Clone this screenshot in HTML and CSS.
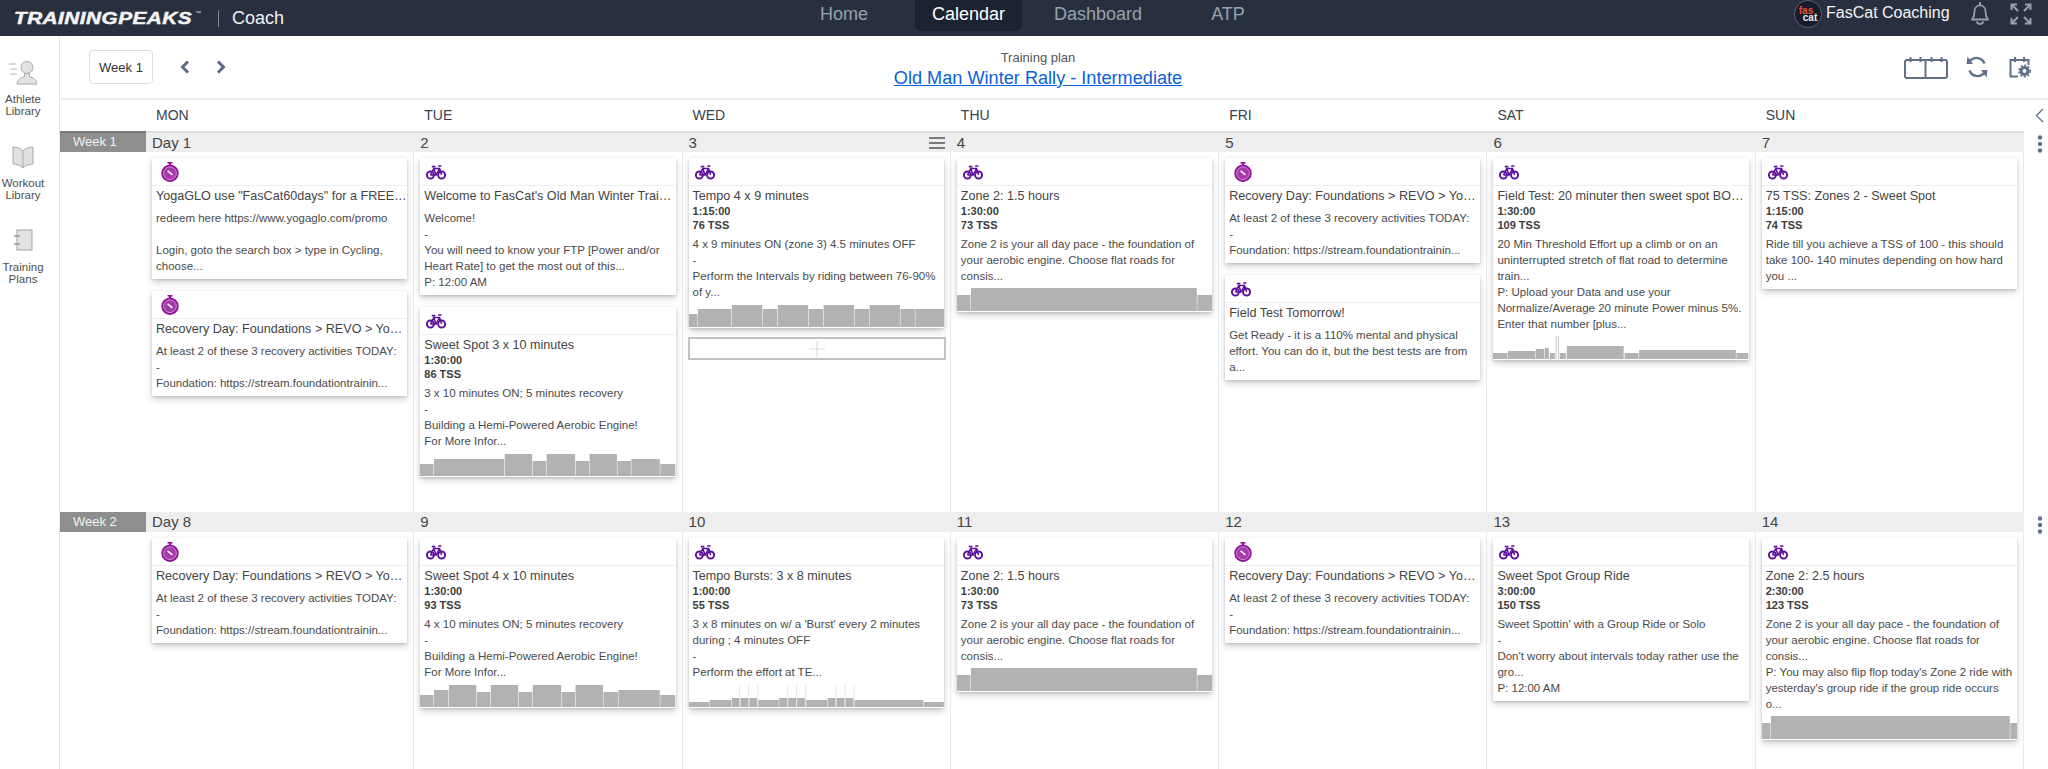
FILE: index.html
```html
<!DOCTYPE html>
<html lang="en">
<head>
<meta charset="utf-8">
<title>TrainingPeaks Coach - Calendar</title>
<link rel="stylesheet" href="styles.css">
</head>
<body>
<svg class="defs" width="0" height="0" aria-hidden="true">
  <symbol id="bike" viewBox="0 0 20 15">
    <g fill="none" stroke="#5b0f9b" stroke-width="1.9">
      <circle cx="4.4" cy="10" r="3.5"/>
      <circle cx="15.6" cy="10" r="3.5"/>
      <path d="M4.4 10 7.8 3.6H13.6L15.6 10M7.8 3.6 10 10H4.4M13.6 3.6 10 10" stroke-width="1.5"/>
      <path d="M5.8 1.6H9.4M12.2 1H15.4" stroke-width="1.6"/>
    </g>
  </symbol>
  <symbol id="watch" viewBox="0 0 18 20">
    <rect x="6.5" y="0" width="5" height="1.6" fill="#94109a"/>
    <rect x="8" y="1" width="2" height="2" fill="#94109a"/>
    <circle cx="9" cy="11.2" r="8.7" fill="#94109a"/>
    <circle cx="9" cy="11.2" r="6.4" fill="#a53aaa" stroke="#e2b8e4" stroke-width=".7"/>
    <path d="M6.6 8.8 11.4 12.8" stroke="#fff" stroke-width="1.5"/>
  </symbol>
  <symbol id="kebab" viewBox="0 0 6 18">
    <circle cx="3" cy="2.5" r="2.2" fill="#5f7088"/>
    <circle cx="3" cy="9" r="2.2" fill="#5f7088"/>
    <circle cx="3" cy="15.5" r="2.2" fill="#5f7088"/>
  </symbol>
</svg>

<header class="topbar">
  <div class="brand">
    <span class="logo"><span class="logo-word">TRAININGPEAKS</span><span class="tm">™</span></span>
    <span class="brand-sep"></span>
    <span class="brand-app">Coach</span>
  </div>
  <nav class="nav">
    <a class="nav-item nav-home">Home</a>
    <a class="nav-item nav-active">Calendar</a>
    <a class="nav-item nav-dash">Dashboard</a>
    <a class="nav-item nav-atp">ATP</a>
  </nav>
  <div class="account">
    <span class="avatar"><span class="avatar-a">fas</span><span class="avatar-b">cat</span></span>
    <span class="account-name">FasCat Coaching</span>
    <svg class="bell" viewBox="0 0 22 24"><path d="M3 18.5c1.6-1.8 2.4-3.3 2.4-7.5 0-3.8 2.3-6.6 5.6-6.6s5.6 2.8 5.6 6.6c0 4.2.8 5.7 2.4 7.5Z" fill="none" stroke="#98a1ad" stroke-width="1.8" stroke-linejoin="round"/><path d="M11 1.2v3" stroke="#98a1ad" stroke-width="2"/><path d="M7.6 20.4a3.5 3.2 0 0 0 6.8 0" fill="none" stroke="#98a1ad" stroke-width="1.8"/></svg>
    <svg class="expand" viewBox="0 0 22 22"><g fill="none" stroke="#98a1ad" stroke-width="2"><path d="M1.5 7V1.5H7M1.5 1.5 8 8M15 1.5H20.5V7M20.5 1.5 14 8M1.5 15V20.5H7M1.5 20.5 8 14M15 20.5H20.5V15M20.5 20.5 14 14"/></g></svg>
  </div>
</header>

<div class="app">
  <aside class="sidebar">
    <div class="side-item">
      <svg class="side-icon" viewBox="0 0 28 25"><circle cx="18" cy="7.5" r="6" fill="#e2e2e2" stroke="#a8a8a8"/><path d="M8 24c.5-5 4-6 7.5-7.5v-3h5v3c3.500 1.500 7 2.500 7.500 7.500Z" fill="#e2e2e2" stroke="#a8a8a8"/><path d="M0 4h7M2 9h6M1 14h7" stroke="#b5b5b5" stroke-width="1.200"/></svg>
      <span class="side-label">Athlete<br>Library</span>
    </div>
    <div class="side-item">
      <svg class="side-icon" viewBox="0 0 28 25"><path d="M4 3c3 0 7 1 10 4 3-3 7-4 10-4v17c-3 0-7 1-10 4-3-3-7-4-10-4Z" fill="#e0e0e0" stroke="#a8a8a8"/><path d="M14 7v17" stroke="#a8a8a8"/></svg>
      <span class="side-label">Workout<br>Library</span>
    </div>
    <div class="side-item">
      <svg class="side-icon" viewBox="0 0 28 25"><rect x="8" y="2" width="15" height="20" fill="#e2e2e2" stroke="#a3a3a3"/><path d="M5 8h6M5 16h6" stroke="#999" stroke-width="1.500"/></svg>
      <span class="side-label">Training<br>Plans</span>
    </div>
  </aside>

  <main class="content">
    <div class="toolbar">
      <div class="tool-left">
        <button class="week-btn">Week 1</button>
        <svg class="chev" viewBox="0 0 10 14"><path d="M8 1.500 2.500 7 8 12.500" fill="none" stroke="#5b6b85" stroke-width="3"/></svg>
        <svg class="chev chev-next" viewBox="0 0 10 14"><path d="M2 1.500 7.500 7 2 12.500" fill="none" stroke="#5b6b85" stroke-width="3"/></svg>
      </div>
      <div class="tool-center">
        <div class="plan-label">Training plan</div>
        <a class="plan-link">Old Man Winter Rally - Intermediate</a>
      </div>
      <div class="tool-right">
        <svg class="ti-cal" viewBox="0 0 44 23"><g fill="none" stroke="#5f7088" stroke-width="2"><rect x="1" y="4" width="42" height="18" rx="2"/><path d="M21.500 4v18M6.500 1v5M16.500 1v5M27.500 1v5M37.500 1v5"/></g></svg>
        <svg class="ti-sync" viewBox="0 0 22 22"><g fill="none" stroke="#5f7088" stroke-width="2.400"><path d="M18.500 7.500A8.500 8.500 0 0 0 4 5"/><path d="M3.500 14.500A8.500 8.500 0 0 0 18 17"/></g><path d="M1.500 0.500 7 8 0.500 8ZM20.500 21.500 15 14 21.500 14Z" fill="#5f7088"/></svg>
        <svg class="ti-set" viewBox="0 0 22 22"><g fill="none" stroke="#5f7088" stroke-width="2"><path d="M9 20.500H1.500V4H19.500V9"/><path d="M6 1v5M15 1v5"/><circle cx="15.500" cy="15" r="3.500" stroke-width="3.200"/><circle cx="15.500" cy="15" r="5.700" stroke-width="1.500" stroke-dasharray="2 1.700"/></g></svg>
      </div>
    </div>

    <div class="grid dayhead">
      <div></div>
      <div class="dayname">MON</div>
      <div class="dayname">TUE</div>
      <div class="dayname">WED</div>
      <div class="dayname">THU</div>
      <div class="dayname">FRI</div>
      <div class="dayname">SAT</div>
      <div class="dayname">SUN</div>
      <div class="collapse"><svg class="collapse-icon" viewBox="0 0 9 15"><path d="M8 1 1.500 7.500 8 14" fill="none" stroke="#5f7088" stroke-width="1.300"/></svg></div>
    </div>

    <section class="grid week week-one">
      <div class="week-label">Week 1</div>

      <div class="day">
        <div class="bar">Day 1</div>
        <div class="body">
          <article class="card">
            <div class="card-head"><svg class="i-watch"><use href="#watch"/></svg></div>
            <div class="title">YogaGLO use "FasCat60days" for a FREE…</div>
            <div class="desc">redeem here https://www.yogaglo.com/promo<br><br>Login, goto the search box &gt; type in Cycling,<br>choose...</div>
          </article>
          <article class="card">
            <div class="card-head"><svg class="i-watch"><use href="#watch"/></svg></div>
            <div class="title">Recovery Day: Foundations &gt; REVO &gt; Yo…</div>
            <div class="desc">At least 2 of these 3 recovery activities TODAY:<br>-<br>Foundation: https://stream.foundationtrainin...</div>
          </article>
        </div>
      </div>

      <div class="day">
        <div class="bar">2</div>
        <div class="body">
          <article class="card">
            <div class="card-head"><svg class="i-bike"><use href="#bike"/></svg></div>
            <div class="title">Welcome to FasCat's Old Man Winter Trai…</div>
            <div class="desc">Welcome!<br>-<br>You will need to know your FTP [Power and/or<br>Heart Rate] to get the most out of this...<br>P: 12:00 AM</div>
          </article>
          <article class="card">
            <div class="card-head"><svg class="i-bike"><use href="#bike"/></svg></div>
            <div class="title">Sweet Spot 3 x 10 minutes</div>
            <div class="metrics">1:30:00<br>86 TSS</div>
            <div class="desc desc-chart">3 x 10 minutes ON; 5 minutes recovery<br>-<br>Building a Hemi-Powered Aerobic Engine!<br>For More Infor...</div>
            <svg class="chart" viewBox="0 0 256 23" preserveAspectRatio="none"><rect x="0" y="11" width="13.500" height="12"/><rect x="14" y="6" width="70.500" height="17"/><rect x="85" y="1" width="27.500" height="22"/><rect x="113" y="8" width="13.500" height="15"/><rect x="127" y="1" width="28.500" height="22"/><rect x="156" y="8" width="13.500" height="15"/><rect x="170" y="1" width="27.500" height="22"/><rect x="198" y="8" width="13.500" height="15"/><rect x="212" y="6" width="28.500" height="17"/><rect x="241" y="11" width="15" height="12"/></svg>
          </article>
        </div>
      </div>

      <div class="day">
        <div class="bar bar-menu">3
          <svg class="menu" viewBox="0 0 16 12"><path d="M0 1h16M0 6h16M0 11h16" stroke="#555" stroke-width="1.500"/></svg>
        </div>
        <div class="body">
          <article class="card card-tight">
            <div class="card-head"><svg class="i-bike"><use href="#bike"/></svg></div>
            <div class="title">Tempo 4 x 9 minutes</div>
            <div class="metrics">1:15:00<br>76 TSS</div>
            <div class="desc desc-chart">4 x 9 minutes ON (zone 3) 4.5 minutes OFF<br>-<br>Perform the Intervals by riding between 76-90%<br>of y...</div>
            <svg class="chart" viewBox="0 0 256 23" preserveAspectRatio="none"><rect x="0" y="10" width="8.500" height="13"/><rect x="9" y="5" width="33.500" height="18"/><rect x="43" y="1" width="30.500" height="22"/><rect x="74" y="5" width="14.500" height="18"/><rect x="89" y="1" width="30.500" height="22"/><rect x="120" y="5" width="14.500" height="18"/><rect x="135" y="1" width="30.500" height="22"/><rect x="166" y="5" width="14.500" height="18"/><rect x="181" y="1" width="30.500" height="22"/><rect x="212" y="5" width="14.500" height="18"/><rect x="227" y="5" width="29" height="18"/></svg>
          </article>
          <div class="add-box"><svg class="plus" viewBox="0 0 16 16"><path d="M8 0v16M0 8h16" stroke="#d9d9d9" stroke-width="1.200"/></svg></div>
        </div>
      </div>

      <div class="day">
        <div class="bar">4</div>
        <div class="body">
          <article class="card">
            <div class="card-head"><svg class="i-bike"><use href="#bike"/></svg></div>
            <div class="title">Zone 2: 1.5 hours</div>
            <div class="metrics">1:30:00<br>73 TSS</div>
            <div class="desc desc-chart">Zone 2 is your all day pace - the foundation of<br>your aerobic engine. Choose flat roads for<br>consis...</div>
            <svg class="chart" viewBox="0 0 256 23" preserveAspectRatio="none"><rect x="0" y="7" width="13.500" height="16"/><rect x="14" y="0" width="226.500" height="23"/><rect x="241" y="7" width="15" height="16"/></svg>
          </article>
        </div>
      </div>

      <div class="day">
        <div class="bar">5</div>
        <div class="body">
          <article class="card">
            <div class="card-head"><svg class="i-watch"><use href="#watch"/></svg></div>
            <div class="title">Recovery Day: Foundations &gt; REVO &gt; Yo…</div>
            <div class="desc">At least 2 of these 3 recovery activities TODAY:<br>-<br>Foundation: https://stream.foundationtrainin...</div>
          </article>
          <article class="card">
            <div class="card-head"><svg class="i-bike"><use href="#bike"/></svg></div>
            <div class="title">Field Test Tomorrow!</div>
            <div class="desc">Get Ready - it is a 110% mental and physical<br>effort. You can do it, but the best tests are from<br>a...</div>
          </article>
        </div>
      </div>

      <div class="day">
        <div class="bar">6</div>
        <div class="body">
          <article class="card">
            <div class="card-head"><svg class="i-bike"><use href="#bike"/></svg></div>
            <div class="title">Field Test: 20 minuter then sweet spot BO…</div>
            <div class="metrics">1:30:00<br>109 TSS</div>
            <div class="desc desc-chart">20 Min Threshold Effort up a climb or on an<br>uninterrupted stretch of flat road to determine<br>train...<br>P: Upload your Data and use your<br>Normalize/Average 20 minute Power minus 5%.<br>Enter that number [plus...</div>
            <svg class="chart" viewBox="0 0 256 23" preserveAspectRatio="none"><rect x="0" y="17" width="14.500" height="6"/><rect x="15" y="15" width="27.500" height="8"/><rect x="43" y="13" width="8.500" height="10"/><rect x="52" y="12" width="4" height="11"/><rect x="57" y="17" width="5" height="6"/><rect class="spike" x="62.800" y="0" width=".9" height="23"/><rect class="spike" x="65.300" y="0" width=".9" height="23"/><rect x="67" y="17" width="6" height="6"/><rect x="74" y="10" width="57" height="13"/><rect x="132" y="17" width="14" height="6"/><rect x="146.500" y="14" width="97" height="9"/><rect x="244" y="17" width="12" height="6"/></svg>
          </article>
        </div>
      </div>

      <div class="day">
        <div class="bar">7</div>
        <div class="body">
          <article class="card">
            <div class="card-head"><svg class="i-bike"><use href="#bike"/></svg></div>
            <div class="title">75 TSS: Zones 2 - Sweet Spot</div>
            <div class="metrics">1:15:00<br>74 TSS</div>
            <div class="desc">Ride till you achieve a TSS of 100 - this should<br>take 100- 140 minutes depending on how hard<br>you ...</div>
          </article>
        </div>
      </div>

      <div class="side-menu"><svg class="kebab"><use href="#kebab"/></svg></div>
    </section>

    <section class="grid week week-two">
      <div class="week-label">Week 2</div>

      <div class="day">
        <div class="bar">Day 8</div>
        <div class="body">
          <article class="card">
            <div class="card-head"><svg class="i-watch"><use href="#watch"/></svg></div>
            <div class="title">Recovery Day: Foundations &gt; REVO &gt; Yo…</div>
            <div class="desc">At least 2 of these 3 recovery activities TODAY:<br>-<br>Foundation: https://stream.foundationtrainin...</div>
          </article>
        </div>
      </div>

      <div class="day">
        <div class="bar">9</div>
        <div class="body">
          <article class="card">
            <div class="card-head"><svg class="i-bike"><use href="#bike"/></svg></div>
            <div class="title">Sweet Spot 4 x 10 minutes</div>
            <div class="metrics">1:30:00<br>93 TSS</div>
            <div class="desc desc-chart">4 x 10 minutes ON; 5 minutes recovery<br>-<br>Building a Hemi-Powered Aerobic Engine!<br>For More Infor...</div>
            <svg class="chart" viewBox="0 0 256 23" preserveAspectRatio="none"><rect x="0" y="11" width="13.500" height="12"/><rect x="14" y="6" width="14.500" height="17"/><rect x="29" y="1" width="27.500" height="22"/><rect x="57" y="8" width="13.500" height="15"/><rect x="71" y="1" width="27.500" height="22"/><rect x="99" y="8" width="13.500" height="15"/><rect x="113" y="1" width="28.500" height="22"/><rect x="142" y="8" width="13.500" height="15"/><rect x="156" y="1" width="27.500" height="22"/><rect x="184" y="8" width="14.500" height="15"/><rect x="199" y="6" width="41.500" height="17"/><rect x="241" y="11" width="15" height="12"/></svg>
          </article>
        </div>
      </div>

      <div class="day">
        <div class="bar">10</div>
        <div class="body">
          <article class="card">
            <div class="card-head"><svg class="i-bike"><use href="#bike"/></svg></div>
            <div class="title">Tempo Bursts: 3 x 8 minutes</div>
            <div class="metrics">1:00:00<br>55 TSS</div>
            <div class="desc desc-chart">3 x 8 minutes on w/ a 'Burst' every 2 minutes<br>during ; 4 minutes OFF<br>-<br>Perform the effort at TE...</div>
            <svg class="chart" viewBox="0 0 256 23" preserveAspectRatio="none"><rect x="0" y="18" width="20.500" height="5"/><rect x="21" y="16" width="21.500" height="7"/><rect x="43" y="14" width="7.500" height="9"/><rect class="faint" x="50.500" y="0" width=".7" height="23"/><rect x="51.500" y="14" width="8" height="9"/><rect class="faint" x="59.500" y="0" width=".7" height="23"/><rect x="60.500" y="14" width="8" height="9"/><rect class="faint" x="68.700" y="0" width=".7" height="23"/><rect x="69.500" y="16" width="20.500" height="7"/><rect x="90.500" y="14" width="8" height="9"/><rect class="faint" x="98.700" y="0" width=".7" height="23"/><rect x="99.500" y="14" width="8" height="9"/><rect class="faint" x="107.700" y="0" width=".7" height="23"/><rect x="108.500" y="14" width="8" height="9"/><rect class="faint" x="116.700" y="0" width=".7" height="23"/><rect x="117.500" y="16" width="21" height="7"/><rect x="139" y="14" width="8" height="9"/><rect class="faint" x="147.200" y="0" width=".7" height="23"/><rect x="148" y="14" width="8" height="9"/><rect class="faint" x="156.200" y="0" width=".7" height="23"/><rect x="157" y="14" width="8" height="9"/><rect class="faint" x="165.200" y="0" width=".7" height="23"/><rect x="166" y="16" width="69" height="7"/><rect x="235.500" y="18" width="20.500" height="5"/></svg>
          </article>
        </div>
      </div>

      <div class="day">
        <div class="bar">11</div>
        <div class="body">
          <article class="card">
            <div class="card-head"><svg class="i-bike"><use href="#bike"/></svg></div>
            <div class="title">Zone 2: 1.5 hours</div>
            <div class="metrics">1:30:00<br>73 TSS</div>
            <div class="desc desc-chart">Zone 2 is your all day pace - the foundation of<br>your aerobic engine. Choose flat roads for<br>consis...</div>
            <svg class="chart" viewBox="0 0 256 23" preserveAspectRatio="none"><rect x="0" y="7" width="13.500" height="16"/><rect x="14" y="0" width="226.500" height="23"/><rect x="241" y="7" width="15" height="16"/></svg>
          </article>
        </div>
      </div>

      <div class="day">
        <div class="bar">12</div>
        <div class="body">
          <article class="card">
            <div class="card-head"><svg class="i-watch"><use href="#watch"/></svg></div>
            <div class="title">Recovery Day: Foundations &gt; REVO &gt; Yo…</div>
            <div class="desc">At least 2 of these 3 recovery activities TODAY:<br>-<br>Foundation: https://stream.foundationtrainin...</div>
          </article>
        </div>
      </div>

      <div class="day">
        <div class="bar">13</div>
        <div class="body">
          <article class="card">
            <div class="card-head"><svg class="i-bike"><use href="#bike"/></svg></div>
            <div class="title">Sweet Spot Group Ride</div>
            <div class="metrics">3:00:00<br>150 TSS</div>
            <div class="desc">Sweet Spottin' with a Group Ride or Solo<br>-<br>Don't worry about intervals today rather use the<br>gro...<br>P: 12:00 AM</div>
          </article>
        </div>
      </div>

      <div class="day">
        <div class="bar">14</div>
        <div class="body">
          <article class="card">
            <div class="card-head"><svg class="i-bike"><use href="#bike"/></svg></div>
            <div class="title">Zone 2: 2.5 hours</div>
            <div class="metrics">2:30:00<br>123 TSS</div>
            <div class="desc desc-chart">Zone 2 is your all day pace - the foundation of<br>your aerobic engine. Choose flat roads for<br>consis...<br>P: You may also flip flop today's Zone 2 ride with<br>yesterday's group ride if the group ride occurs<br>o...</div>
            <svg class="chart" viewBox="0 0 256 23" preserveAspectRatio="none"><rect x="0" y="7" width="8.500" height="16"/><rect x="9" y="0" width="239.500" height="23"/><rect x="249" y="7" width="7" height="16"/></svg>
          </article>
        </div>
      </div>

      <div class="side-menu"><svg class="kebab"><use href="#kebab"/></svg></div>
    </section>
  </main>
</div>
</body>
</html>
```

FILE: styles.css
```css
* { box-sizing: border-box; }
html, body { margin: 0; padding: 0; height: 769px; overflow: hidden; }
body { font-family: "Liberation Sans", Arial, sans-serif; color: #444; background: #fff; }
.defs { position: absolute; }

/* top bar */
.topbar { display: flex; height: 36px; background: #283040; color: #fff; }
.brand { display: flex; align-items: center; width: 803px; padding-left: 14px; }
.logo { display: flex; align-items: flex-start; width: 190px; white-space: nowrap; line-height: 1; }
.logo-word { display: block; font-size: 17px; font-weight: 700; font-style: italic; letter-spacing: .4px; color: #f4f4f4; -webkit-text-stroke: .5px #f4f4f4; transform: scaleX(1.22); transform-origin: left center; }
.tm { font-size: 6px; margin-left: 35px; color: #ddd; }
.brand-sep { width: 1px; height: 17px; background: #7d8591; margin: 0 13px 0 14px; }
.brand-app { font-size: 18px; color: #f0f1f3; }
.nav { display: flex; height: 31px; }
.nav-item { font-size: 18px; line-height: 28px; padding: 0 17px; color: #98a0ac; }
.nav-home { margin-right: 30px; }
.nav-active { color: #fff; background: #1b2331; border-radius: 0 0 6px 6px; }
.nav-dash { margin-left: 15px; margin-right: 35px; }
.account { display: flex; align-items: flex-start; margin-left: auto; padding-right: 16px; }
.avatar { width: 28px; height: 28px; border-radius: 50%; background: #191a2c; border: 1px solid #596070; display: flex; flex-direction: column; align-items: center; justify-content: center; font-size: 10px; line-height: 7px; font-weight: 700; }
.avatar-a { color: #e8522a; margin-right: 4px; }
.avatar-b { color: #eee; margin-left: 4px; }
.account-name { font-size: 16px; line-height: 26px; margin-left: 4px; color: #f5f5f5; width: 122px; white-space: nowrap; }
.bell { width: 22px; height: 24px; margin: 1px 0 0 21px; }
.expand { width: 22px; height: 22px; margin: 3px 0 0 19px; }

/* frame */
.app { display: flex; height: 733px; }
.sidebar { width: 60px; flex: none; border-right: 1px solid #e2e7ee; padding-top: 24px; display: flex; flex-direction: column; gap: 16px; }
.side-item { width: 46px; height: 68px; display: flex; flex-direction: column; align-items: center; }
.side-icon { width: 28px; height: 25px; flex: none; }
.side-label { font-size: 11.5px; line-height: 11.5px; color: #4d4d4d; text-align: center; margin-top: 9px; }
.content { flex: 1; min-width: 0; }

/* toolbar */
.toolbar { display: grid; grid-template-columns: 777px 400px 1fr; height: 64px; border-bottom: 2px solid #e9edf3; margin-left: 1px; }
.tool-left { display: flex; align-items: center; padding-left: 28px; }
.week-btn { width: 64px; height: 34px; padding: 0; background: #fff; border: 1px solid #d5dde8; border-radius: 4px; font: 13px "Liberation Sans", Arial, sans-serif; color: #333; }
.chev { width: 10px; height: 14px; margin-left: 27px; }
.chev-next { margin-left: 26px; }
.tool-center { text-align: center; padding-top: 14px; }
.plan-label { font-size: 13px; line-height: 16px; color: #555; }
.plan-link { display: block; font-size: 18.15px; line-height: 25px; color: #0c5fd6; text-decoration: underline; }
.tool-right { display: flex; justify-content: flex-end; align-items: flex-start; padding: 20px 17px 0 0; }
.ti-cal { width: 44px; height: 23px; }
.ti-sync { width: 22px; height: 22px; margin-left: 18px; }
.ti-set { width: 22px; height: 22px; margin-left: 21px; }

/* calendar grid */
.grid { display: grid; grid-template-columns: 86px repeat(7, minmax(0, 1fr)) 24px; }
.dayhead { height: 31px; align-items: center; padding-bottom: 1px; }
.dayname { font-size: 14px; color: #384152; padding-left: 10px; }
.collapse { display: flex; justify-content: flex-end; padding-right: 4px; }
.collapse-icon { width: 9px; height: 15px; }
.week-one { height: 381px; }
.week-two { height: 257px; }
.week-label { height: 21px; background: #8e8e8e; color: #f2f2f2; font-size: 13px; line-height: 20px; padding-left: 13px; }
.week-one .week-label { border-top: 2px solid #777; line-height: 17px; }
.week-two .week-label { height: 20px; }
.day { display: flex; flex-direction: column; min-width: 0; }
.bar { flex: none; height: 20px; background: #eee; font-size: 15px; line-height: 20px; padding-left: 6px; color: #444; }
.week-one .bar { height: 21px; border-top: 2px solid #ddd; line-height: 19px; }
.bar-menu { display: flex; justify-content: space-between; align-items: center; padding-right: 6px; }
.menu { width: 16px; height: 12px; }
.body { flex: 1; border-right: 1px solid #e3e9f1; padding: 6px 6px 0 6px; }
.side-menu { display: flex; justify-content: flex-end; padding: 4px 5px 0 0; }
.kebab { width: 6px; height: 18px; }

/* cards */
.card { background: #fff; box-shadow: 0 1px 2px rgba(0, 0, 0, .12), 0 3px 7px rgba(0, 0, 0, .2); margin-bottom: 12px; }
.card-tight { margin-bottom: 9px; }
.card-head { height: 28px; border-bottom: 1px solid #eee; padding: 4px 0 0 9px; }
.i-bike { display: block; width: 20px; height: 15px; margin: 3px 0 0 -3px; }
.i-watch { display: block; width: 18px; height: 20px; }
.title { font-size: 12.6px; line-height: 16px; padding: 2px 0 0 4px; color: #444; white-space: nowrap; }
.metrics { font-size: 11px; font-weight: 700; line-height: 14px; color: #3c3c3c; padding-left: 4px; }
.desc { font-size: 11.5px; line-height: 16px; color: #4a4a4a; padding: 0 0 5px 4px; margin-top: 6px; white-space: nowrap; }
.metrics + .desc { margin-top: 4px; }
.desc-chart { padding-bottom: 0; }
.chart { display: block; width: 100%; height: 24px; margin-top: 4px; fill: #b2b2b2; border-bottom: 1px solid #fff; }
.spike { fill: #c4c4c4; }
.faint { fill: #dedede; }
.add-box { height: 23px; border: 2px solid #c2c2c2; display: flex; align-items: center; justify-content: center; width: 258px; margin-left: -1px; }
.plus { width: 16px; height: 16px; }
```
